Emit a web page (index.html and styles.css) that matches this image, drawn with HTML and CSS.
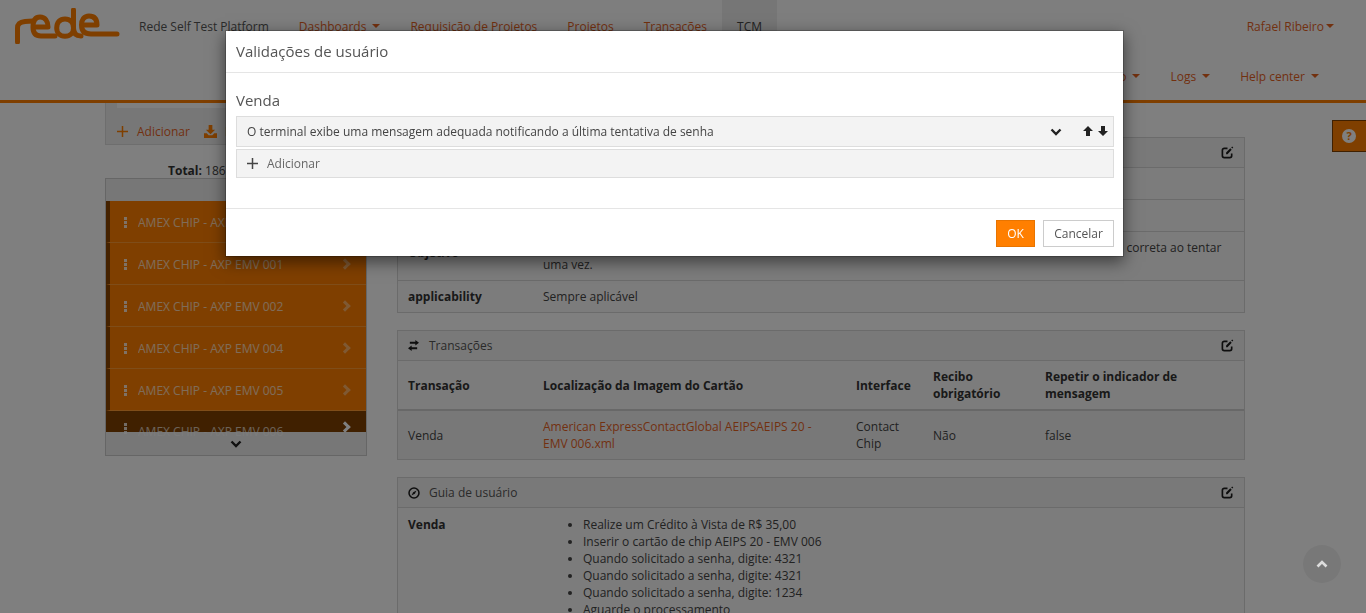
FILE: index.html
```html
<!DOCTYPE html>
<html lang="pt-BR">
<head>
    <meta charset="UTF-8">
    <meta name="viewport" content="width=device-width, initial-scale=1.0">
    <title>Rede Self Test Platform</title>
    <link rel="stylesheet" href="styles.css">
</head>
<body>

<header class="topbar">
    <div class="nav-row">
        <svg class="logo" viewBox="0 0 106 36" width="106" height="36">
            <g fill="none" stroke="#ff7f00" stroke-width="5" stroke-linecap="round" stroke-linejoin="round">
                <path d="M2.500 34V20C2.500 15 6 14 10 13.500L18 13"/>
                <path d="M19 19H33C33 13 30 9 25 9C20 9 18 13 18 19C18 25 21 28 26 28H40"/>
                <path d="M58.500 2V20C58.500 25 55 28.300 50 28.300C45 28.300 41.700 25 41.700 20C41.700 14 45 11 50 11C55 11 58.500 14 58.500 20C58.500 25 61 28 66 28"/>
                <path d="M67 17H82C82 11 79 8 74 8C69 8 66.500 12 66.500 17C66.500 23 70 26 76 26H102"/>
            </g>
        </svg>
        <span class="brand">Rede Self Test Platform</span>
        <a class="nav-link">Dashboards <i class="caret"></i></a>
        <a class="nav-link">Requisição de Projetos</a>
        <a class="nav-link">Projetos</a>
        <a class="nav-link">Transações</a>
        <a class="nav-link active">TCM</a>
        <a class="nav-link user">Rafael Ribeiro<i class="caret"></i></a>
    </div>
    <div class="nav-row second">
        <a class="nav-link">Relatório <i class="caret"></i></a>
        <a class="nav-link">Logs <i class="caret"></i></a>
        <a class="nav-link">Help center <i class="caret"></i></a>
    </div>
</header>

<div class="page">
    <aside class="sidebar">
        <div class="toolbar">
            <div class="search-edge"></div>
            <div class="toolbar-actions">
                <svg class="plus" viewBox="0 0 11 11" width="11" height="11"><path d="M5.500 0v11M0 5.500h11" stroke="#ff7f00" stroke-width="1.500"/></svg>
                <a>Adicionar</a>
                <svg class="download" viewBox="0 0 14 14" width="13" height="13"><path d="M5 0h4v5h3L7 10 2 5h3zM0 9h3l2 2h4l2-2h3v5H0z" fill="#ff7f00"/></svg>
                <a>Importar</a>
            </div>
        </div>
        <div class="total"><b>Total:</b> 186</div>
        <div class="case-list">
            <div class="list-arrow top"></div>
            <div class="case"><i class="dots"></i><span>AMEX CHIP - AXP EMV 000</span><i class="chev"></i></div>
            <div class="case"><i class="dots"></i><span>AMEX CHIP - AXP EMV 001</span><i class="chev"></i></div>
            <div class="case"><i class="dots"></i><span>AMEX CHIP - AXP EMV 002</span><i class="chev"></i></div>
            <div class="case"><i class="dots"></i><span>AMEX CHIP - AXP EMV 004</span><i class="chev"></i></div>
            <div class="case"><i class="dots"></i><span>AMEX CHIP - AXP EMV 005</span><i class="chev"></i></div>
            <div class="case selected"><i class="dots"></i><span>AMEX CHIP - AXP EMV 006</span><i class="chev"></i></div>
            <div class="list-arrow bottom">
                <svg viewBox="0 0 12 8" width="12" height="8"><path d="M1.500 1.500 6 6l4.500-4.500" fill="none" stroke="#222" stroke-width="2.400"/></svg>
            </div>
        </div>
    </aside>

    <main class="content">
        <section class="panel">
            <div class="panel-head">
                <span>Informações</span>
                <svg class="edit" viewBox="0 0 14 14" width="13" height="13"><use href="#edit-icon"/></svg>
            </div>
            <div class="row"><b>Nome</b><span>AMEX CHIP - AXP EMV 006</span></div>
            <div class="row"><b>Descrição</b><span>Senha incorreta</span></div>
            <div class="row tall"><b>Objetivo</b><span>Verificar se o terminal exibe a mensagem adequada ao usuário quando o portador não informa a senha correta ao tentar<br>uma vez.</span></div>
            <div class="row"><b>applicability</b><span>Sempre aplicável</span></div>
        </section>

        <section class="panel">
            <div class="panel-head">
                <svg class="head-icon swap" viewBox="0 0 14 12" width="13" height="11"><path d="M9 0l4 3-4 3V4H3V2h6zM5 6v2h6v2H5v2L1 9z" fill="#1c1c1c"/></svg>
                <span>Transações</span>
                <svg class="edit" viewBox="0 0 14 14" width="13" height="13"><use href="#edit-icon"/></svg>
            </div>
            <table class="tx-table">
                <thead>
                    <tr>
                        <th class="c1">Transação</th>
                        <th class="c2">Localização da Imagem do Cartão</th>
                        <th class="c3">Interface</th>
                        <th class="c4">Recibo obrigatório</th>
                        <th>Repetir o indicador de mensagem</th>
                    </tr>
                </thead>
                <tbody>
                    <tr>
                        <td>Venda</td>
                        <td><a>American ExpressContactGlobal AEIPSAEIPS 20 - EMV 006.xml</a></td>
                        <td>Contact Chip</td>
                        <td>Não</td>
                        <td>false</td>
                    </tr>
                </tbody>
            </table>
        </section>

        <section class="panel last">
            <div class="panel-head">
                <svg class="head-icon compass" viewBox="0 0 14 14" width="12" height="12"><circle cx="7" cy="7" r="5.800" fill="none" stroke="#1c1c1c" stroke-width="1.800"/><path d="M10 4 8 8 4 10l2-4z" fill="#1c1c1c"/></svg>
                <span>Guia de usuário</span>
                <svg class="edit" viewBox="0 0 14 14" width="13" height="13"><use href="#edit-icon"/></svg>
            </div>
            <div class="guide">
                <b>Venda</b>
                <ul>
                    <li>Realize um Crédito à Vista de R$ 35,00</li>
                    <li>Inserir o cartão de chip AEIPS 20 - EMV 006</li>
                    <li>Quando solicitado a senha, digite: 4321</li>
                    <li>Quando solicitado a senha, digite: 4321</li>
                    <li>Quando solicitado a senha, digite: 1234</li>
                    <li>Aguarde o processamento</li>
                </ul>
            </div>
        </section>
    </main>
</div>

<svg class="defs" width="0" height="0">
    <symbol id="edit-icon" viewBox="0 0 14 14">
        <path d="M7 2.500H3.500a2 2 0 0 0-2 2v6a2 2 0 0 0 2 2h6a2 2 0 0 0 2-2V8" fill="none" stroke="#1c1c1c" stroke-width="1.800"/>
        <path d="M5.500 9V7L10 2.500l1.500 1.500L7 9zM11 1.500l1-1 1.200 1.200-1 1z" fill="#1c1c1c"/>
    </symbol>
</svg>

<a class="help-tab">
    <svg viewBox="0 0 14 14" width="14" height="14"><circle cx="7" cy="7" r="7" fill="#fff"/><text x="7" y="11" text-anchor="middle" class="help-mark">?</text></svg>
</a>

<div class="backdrop"></div>

<a class="to-top">
    <svg viewBox="0 0 12 8" width="12" height="8"><path d="M1.500 6.500 6 2l4.500 4.500" fill="none" stroke="#ddd" stroke-width="2.600"/></svg>
</a>

<div class="modal">
    <div class="modal-head">Validações de usuário</div>
    <div class="modal-body">
        <h4>Venda</h4>
        <div class="validation">
            <span>O terminal exibe uma mensagem adequada notificando a última tentativa de senha</span>
            <svg class="val-chev" viewBox="0 0 12 8" width="12" height="8"><path d="M1.500 1.500 6 6l4.500-4.500" fill="none" stroke="#222" stroke-width="2.400"/></svg>
            <svg class="val-arrow" viewBox="0 0 10 10" width="10" height="10"><path d="M5 0l5 5H7v5H3V5H0z" fill="#222"/></svg>
            <svg class="val-arrow" viewBox="0 0 10 10" width="10" height="10"><path d="M5 10 0 5h3V0h4v5h3z" fill="#222"/></svg>
        </div>
        <div class="add-row">
            <svg class="plus" viewBox="0 0 11 11" width="11" height="11"><path d="M5.500 0v11M0 5.500h11" stroke="#444" stroke-width="1.500"/></svg>
            <a>Adicionar</a>
        </div>
    </div>
    <div class="modal-foot">
        <button class="btn-ok">OK</button>
        <button class="btn-cancel">Cancelar</button>
    </div>
</div>

</body>
</html>
```

FILE: styles.css
```css
* {
    box-sizing: border-box;
}

html, body {
    height: 100%;
    overflow: hidden;
}

body {
    margin: 0;
    background-color: #fff;
    color: #444;
    font-family: "Open Sans", Arial, sans-serif;
    font-size: 12px;
    line-height: 17px;
}

a {
    color: #e5621f;
}

b, th {
    color: #333;
}

.defs {
    display: block;
    height: 0;
}

/* header */
.topbar {
    height: 103px;
    background-color: #fcfcfc;
    border-bottom: 3px solid #ff7f00;
}

.nav-row {
    display: flex;
    height: 50px;
    align-items: center;
}

.logo {
    align-self: flex-start;
    margin: 8px 18px 0 15px;
    flex: none;
}

.brand {
    margin-right: 15px;
    padding-top: 2px;
    color: #555;
}

.nav-link {
    display: flex;
    align-items: center;
    height: 100%;
    padding: 2px 15px 0;
    white-space: nowrap;
}

.nav-link.active {
    background-color: #ececec;
    color: #444;
}

.nav-link.user {
    margin-left: auto;
    padding-right: 32px;
}

.nav-row.second {
    justify-content: flex-end;
    padding-right: 47px;
}

.nav-row.second .nav-link {
    padding: 2px 0 0 30px;
}

.caret {
    display: inline-block;
    margin-left: 6px;
    border-top: 4px solid currentColor;
    border-left: 4px solid transparent;
    border-right: 4px solid transparent;
}

.user .caret {
    margin-left: 2px;
}

/* layout */
.page {
    display: flex;
    align-items: flex-start;
    gap: 30px;
    padding-left: 105px;
}

.sidebar {
    width: 262px;
    flex: none;
}

.content {
    width: 848px;
    padding-top: 34px;
}

/* sidebar */
.toolbar {
    height: 42px;
    padding: 0 0 0 11px;
    background-color: #eee;
    border: 1px solid #ddd;
    border-top: none;
}

.search-edge {
    height: 5px;
    background-color: #fff;
    margin-right: 10px;
}

.toolbar-actions {
    display: flex;
    align-items: center;
    height: 36px;
    padding-top: 10px;
    overflow: hidden;
    white-space: nowrap;
}

.plus {
    flex: none;
    margin-right: 9px;
}

.download {
    flex: none;
    margin: 0 8px 0 14px;
}

.total {
    height: 16px;
    margin-top: 17px;
    padding-left: 63px;
    white-space: nowrap;
}

.case-list {
    height: 278px;
    border: 1px solid #ccc;
    overflow: hidden;
}

.list-arrow {
    background-color: #eee;
}

.list-arrow.top {
    height: 22px;
}

.list-arrow.bottom {
    display: flex;
    align-items: center;
    justify-content: center;
    height: 23px;
}

.case {
    display: flex;
    align-items: center;
    height: 42px;
    padding: 1px 0 0 14px;
    background-color: #ff7f00;
    border-left: 4px solid #8a4500;
    border-bottom: 1px solid #ff9a33;
    color: #fff;
}

.case span {
    flex: 1;
    margin-left: 11px;
    opacity: 0.7;
}

.case.selected {
    height: 21px;
    align-items: flex-start;
    padding-top: 12px;
    background-color: #804000;
    border-left-color: #804000;
    border-bottom: none;
}

.dots {
    width: 3px;
    height: 11px;
    background: repeating-linear-gradient(#fff 0 3px, transparent 3px 4px);
    opacity: 0.8;
}

.chev {
    width: 8px;
    height: 8px;
    margin-right: 17px;
    border-top: 3px solid #fff;
    border-right: 3px solid #fff;
    transform: rotate(45deg);
    opacity: 0.4;
}

.case.selected .chev {
    opacity: 1;
}

/* panels */
.panel {
    margin-bottom: 17px;
    background-color: #f8f8f8;
    border: 1px solid #d6d6d6;
}

.panel.last {
    height: 200px;
    margin-bottom: 0;
}

.panel-head {
    display: flex;
    align-items: center;
    height: 30px;
    padding: 0 10px;
    background-color: #f3f3f3;
    border-bottom: 1px solid #d6d6d6;
    color: #555;
}

.head-icon {
    margin-right: 8px;
}

.head-icon.swap {
    margin: 0 9px 0 -1px;
}

.head-icon.compass {
    margin-right: 9px;
}

.edit {
    margin-left: auto;
}

.row {
    display: flex;
    min-height: 32px;
    padding: 7px 10px;
    border-bottom: 1px solid #d6d6d6;
}

.row:last-child {
    min-height: 31px;
    border-bottom: none;
}

.row b {
    width: 135px;
    flex: none;
}

.row.tall b {
    margin-top: 5px;
}

.row.tall span {
    white-space: nowrap;
}

.tx-table {
    width: 100%;
    border-collapse: collapse;
    table-layout: fixed;
}

.tx-table th {
    height: 48px;
    padding: 7px 10px;
    text-align: left;
    vertical-align: middle;
    border-bottom: 2px solid #d0d0d0;
}

.tx-table td {
    height: 49px;
    padding: 7px 10px;
    background-color: #f1f1f1;
}

.c1 {
    width: 135px;
}

.c2 {
    width: 313px;
}

.c3 {
    width: 77px;
}

.c4 {
    width: 112px;
}

.guide {
    display: flex;
    padding: 8px 10px;
}

.guide b {
    width: 135px;
    flex: none;
}

.guide ul {
    margin: 0;
    padding: 0 0 0 40px;
}

.help-tab {
    position: fixed;
    top: 120px;
    right: 0;
    display: flex;
    align-items: center;
    width: 34px;
    height: 32px;
    padding-left: 9px;
    background-color: #ff7f00;
    border: 1px solid #804000;
    border-right: none;
}

.help-mark {
    font-size: 11px;
    font-weight: 700;
    fill: #ff7f00;
}

.to-top {
    position: fixed;
    left: 1303px;
    top: 545px;
    display: flex;
    align-items: center;
    justify-content: center;
    width: 38px;
    height: 38px;
    background-color: rgba(0, 0, 0, 0.06);
    border-radius: 50%;
}

/* modal */
.backdrop {
    position: fixed;
    inset: 0;
    background-color: rgba(0, 0, 0, 0.5);
}

.modal {
    position: fixed;
    top: 30px;
    left: 225px;
    width: 899px;
    height: 227px;
    background-color: #fff;
    background-clip: padding-box;
    border: 1px solid rgba(0, 0, 0, 0.2);
    box-shadow: 0 5px 15px rgba(0, 0, 0, 0.5);
}

.modal-head {
    height: 42px;
    padding: 0 10px;
    border-bottom: 1px solid #e5e5e5;
    font-size: 15px;
    line-height: 40px;
    color: #555;
}

.modal-body {
    height: 136px;
    padding: 17px 9px 0 10px;
    border-bottom: 1px solid #e5e5e5;
}

.modal-body h4 {
    margin: 0 0 6px;
    font-size: 15px;
    font-weight: 400;
    line-height: 20px;
    color: #555;
}

.validation, .add-row {
    display: flex;
    align-items: center;
    background-color: #f3f3f3;
    border: 1px solid #ddd;
}

.validation {
    height: 31px;
    padding: 0 5px 0 10px;
    margin-bottom: 2px;
}

.validation span {
    flex: 1;
}

.val-chev {
    margin-right: 16px;
}

.val-arrow {
    margin: 0 0 2px 5px;
}

.add-row {
    height: 29px;
    padding: 0 10px;
}

.add-row a {
    color: #666;
}

.modal-foot {
    display: flex;
    justify-content: flex-end;
    gap: 8px;
    padding: 11px 9px;
}

.modal-foot button {
    height: 27px;
    font-family: inherit;
    font-size: 12px;
}

.btn-ok {
    width: 39px;
    background-color: #ff7f00;
    border: 1px solid #e87400;
    color: #fff;
}

.btn-cancel {
    width: 71px;
    background-color: #fff;
    border: 1px solid #ccc;
    color: #555;
}
```
